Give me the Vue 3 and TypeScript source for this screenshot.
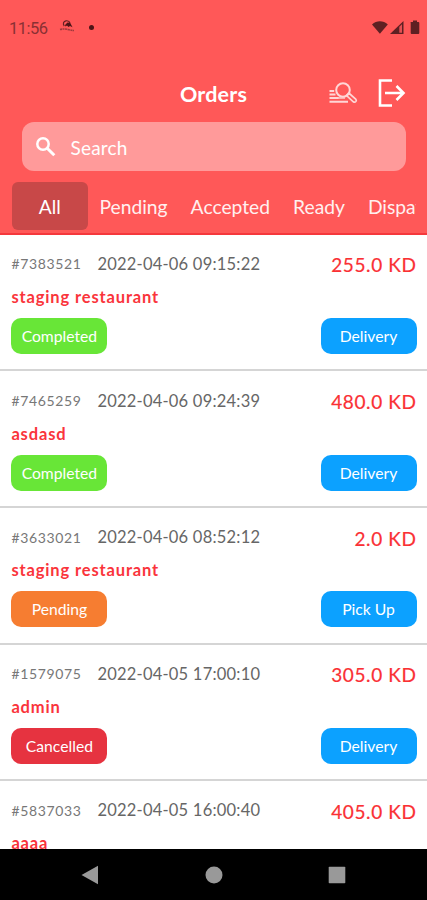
<script setup lang="ts">
interface Order {
  id: string
  date: string
  price: string
  name: string
  status: 'Completed' | 'Pending' | 'Cancelled'
  type: 'Delivery' | 'Pick Up'
}

const tabs = ['All', 'Pending', 'Accepted', 'Ready', 'Dispatched']

const orders: Order[] = [
  { id: '#7383521', date: '2022-04-06 09:15:22', price: '255.0 KD', name: 'staging restaurant', status: 'Completed', type: 'Delivery' },
  { id: '#7465259', date: '2022-04-06 09:24:39', price: '480.0 KD', name: 'asdasd', status: 'Completed', type: 'Delivery' },
  { id: '#3633021', date: '2022-04-06 08:52:12', price: '2.0 KD', name: 'staging restaurant', status: 'Pending', type: 'Pick Up' },
  { id: '#1579075', date: '2022-04-05 17:00:10', price: '305.0 KD', name: 'admin', status: 'Cancelled', type: 'Delivery' },
  { id: '#5837033', date: '2022-04-05 16:00:40', price: '405.0 KD', name: 'aaaa', status: 'Completed', type: 'Delivery' },
]
</script>

<template>
  <div class="screen">
    <header class="header">
      <div class="status-bar">
        <span class="clock">11:56</span>
        <svg class="app-icon" width="18" height="16" viewBox="0 0 18 16">
          <path d="M6.300 7C4.500 5 5.500 2.200 8 1.800C10 1.500 11.500 2.500 12 4" fill="none" stroke="#641f22" stroke-width="1.200" />
          <path d="M7 6L9.500 3.500L12.300 4L14.500 8.200L12 7L10.500 8L9 6.500L7.500 7.500Z" fill="#4d1517" />
          <path d="M2 10.500Q6 9.500 10 10.500T16 11.500" fill="none" stroke="#a03a3d" stroke-width="1.600" stroke-dasharray="2 .5" />
        </svg>
        <span class="dot"></span>
        <svg class="system" width="48" height="15" viewBox="0 0 48 15">
          <g fill="#5e2023">
            <path d="M0 4.500C4.500.200 11.300.200 15.800 4.500L7.900 13.700Z" />
            <path d="M18 14L31.500 1V14Z" />
            <path d="M38.500 2H41V.500H45V2H46.500Q47.300 2 47.300 3V13Q47.300 14 46.300 14H39.700Q38.700 14 38.700 13V3Z" />
          </g>
          <path d="M27.300 6.800L30 4.200V12.700H27.300Z" fill="#e45053" />
        </svg>
      </div>

      <div class="title-bar">
        <h1>Orders</h1>
        <div class="actions">
          <svg width="30" height="24" viewBox="0 0 30 24" fill="none" stroke="#ffd6d6">
            <circle cx="15" cy="9" r="6.800" stroke-width="2" />
            <path d="M18.500 14.500L25.300 20.800Q26.800 21.700 27.900 20.500Q28.800 19.300 27.700 18.200L20.800 12Z" stroke-width="1.700" />
            <path d="M1.500 10H6.200M1.500 13.500H7.500M1.500 17H10.500M1.500 20.800H20" stroke-width="1.900" />
            <path d="M9 17H17" stroke-width="1.400" />
          </svg>
          <svg width="28" height="30" viewBox="0 0 28 30" fill="none" stroke="#fff" stroke-width="2.600">
            <path d="M14 2.500H2V27.500H14" />
            <path d="M7 15H25.500M18.500 8L25.500 15L18.500 22" />
          </svg>
        </div>
      </div>

      <div class="search">
        <svg width="22" height="22" viewBox="0 0 22 22" fill="none" stroke="#fff">
          <circle cx="8" cy="8" r="5.700" stroke-width="2.500" />
          <path d="M12.200 12.200L19.300 19.300" stroke-width="3" />
        </svg>
        <span>Search</span>
      </div>

      <nav class="tabs">
        <button v-for="(tab, i) in tabs" :key="tab" type="button" class="tab" :class="{ active: i === 0 }">{{ tab }}</button>
      </nav>
    </header>

    <main class="orders">
      <article v-for="order in orders" :key="order.id" class="order">
        <div class="line">
          <span class="id">{{ order.id }}</span>
          <time class="date">{{ order.date }}</time>
          <span class="price">{{ order.price }}</span>
        </div>
        <div class="name">{{ order.name }}</div>
        <div class="badges">
          <span class="badge" :class="order.status.toLowerCase()">{{ order.status }}</span>
          <span class="badge type">{{ order.type }}</span>
        </div>
      </article>
    </main>

    <footer class="nav-bar">
      <svg width="18" height="20" viewBox="0 0 18 20"><path d="M.500 10L17 .800V19.200Z" fill="#999" /></svg>
      <svg width="18" height="18" viewBox="0 0 18 18"><circle cx="9" cy="9" r="8.500" fill="#999" /></svg>
      <svg width="18" height="18" viewBox="0 0 18 18"><rect x=".700" y=".700" width="16.600" height="16.600" rx=".8" fill="#999" /></svg>
    </footer>
  </div>
</template>

<style>
body {
  margin: 0;
}
</style>

<style scoped>
.screen {
  display: flex;
  flex-direction: column;
  width: 427px;
  height: 900px;
  overflow: hidden;
  background: #fff;
  font-family: Lato, 'Liberation Sans', sans-serif;
}

.header {
  flex: none;
  box-sizing: border-box;
  height: 234.800px;
  background: #ff5858;
  border-bottom: 2px solid #f5383c;
}

.status-bar {
  display: flex;
  align-items: center;
  height: 54px;
  padding: 0 7.500px 0 9px;
}

.clock {
  width: 39px;
  padding-top: 3px;
  font: 400 16.500px/20px Roboto, sans-serif;
  letter-spacing: -0.500px;
  color: #8a3033;
}

.app-icon {
  margin-left: 10px;
}

.dot {
  width: 5px;
  height: 5px;
  margin-left: 12.500px;
  border-radius: 50%;
  background: #4d1517;
}

.system {
  margin-left: auto;
}

.title-bar {
  display: grid;
  grid-template-columns: 1fr auto 1fr;
  align-items: center;
  height: 68px;
}

h1 {
  grid-column: 2;
  margin: 11px 0 0;
  font-size: 21.500px;
  line-height: 26px;
  font-weight: 700;
  letter-spacing: 0.200px;
  color: #fff;
}

.actions {
  display: flex;
  align-items: center;
  justify-content: flex-end;
  gap: 20px;
  padding: 9px 21px 0 0;
}

.search {
  display: flex;
  align-items: center;
  gap: 13.500px;
  box-sizing: border-box;
  height: 49px;
  margin: 0 21px 0 22px;
  padding: 1px 13px 0;
  border-radius: 12px;
  background: #ff9a9a;
  color: #fff;
  font-size: 19px;
  letter-spacing: 0.200px;
}

.search svg {
  margin-bottom: 1px;
}

.tabs {
  display: flex;
  height: 48px;
  margin: 10.500px 11px 0 11.500px;
  overflow: hidden;
}

.tab {
  flex: none;
  border: 0;
  border-radius: 6px;
  padding: 2px 11.500px 0;
  background: none;
  color: #fff0f0;
  font: 400 19.250px/24px Lato, sans-serif;
}

.tab.active {
  width: 76.500px;
  background: #c84848;
  color: #fff;
}

.orders {
  flex: 1;
  min-height: 0;
  overflow: hidden;
}

.order {
  box-sizing: border-box;
  height: 136.600px;
  padding: 16.700px 10.500px 0 11.400px;
  border-bottom: 2px solid #d5d5d5;
}

.line {
  display: flex;
  align-items: center;
  height: 25px;
}

.id {
  width: 86px;
  font-size: 14px;
  letter-spacing: 0.650px;
  color: #777;
}

.date {
  font-size: 16.500px;
  letter-spacing: 0.220px;
  color: #666;
}

.price {
  margin-left: auto;
  padding-top: 2px;
  font-size: 19px;
  letter-spacing: 0.600px;
  color: #fa3034;
  -webkit-text-stroke: 0.2px #fa3034;
}

.name {
  height: 24px;
  margin-top: 8.500px;
  font-size: 16.500px;
  line-height: 24px;
  font-weight: 700;
  letter-spacing: 0.860px;
  color: #fa343b;
}

.badges {
  display: flex;
  justify-content: space-between;
  margin-top: 9px;
}

.badge {
  width: 96px;
  height: 36px;
  border-radius: 10px;
  color: #fff;
  font-size: 15.700px;
  line-height: 37px;
  text-align: center;
}

.completed {
  background: #68e637;
}

.pending {
  background: #f67d31;
}

.cancelled {
  background: #e63340;
}

.type {
  background: #0ca1ff;
}

.nav-bar {
  flex: none;
  display: flex;
  align-items: center;
  justify-content: space-between;
  box-sizing: border-box;
  height: 51px;
  padding: 0 81px;
  background: #000;
}
</style>
